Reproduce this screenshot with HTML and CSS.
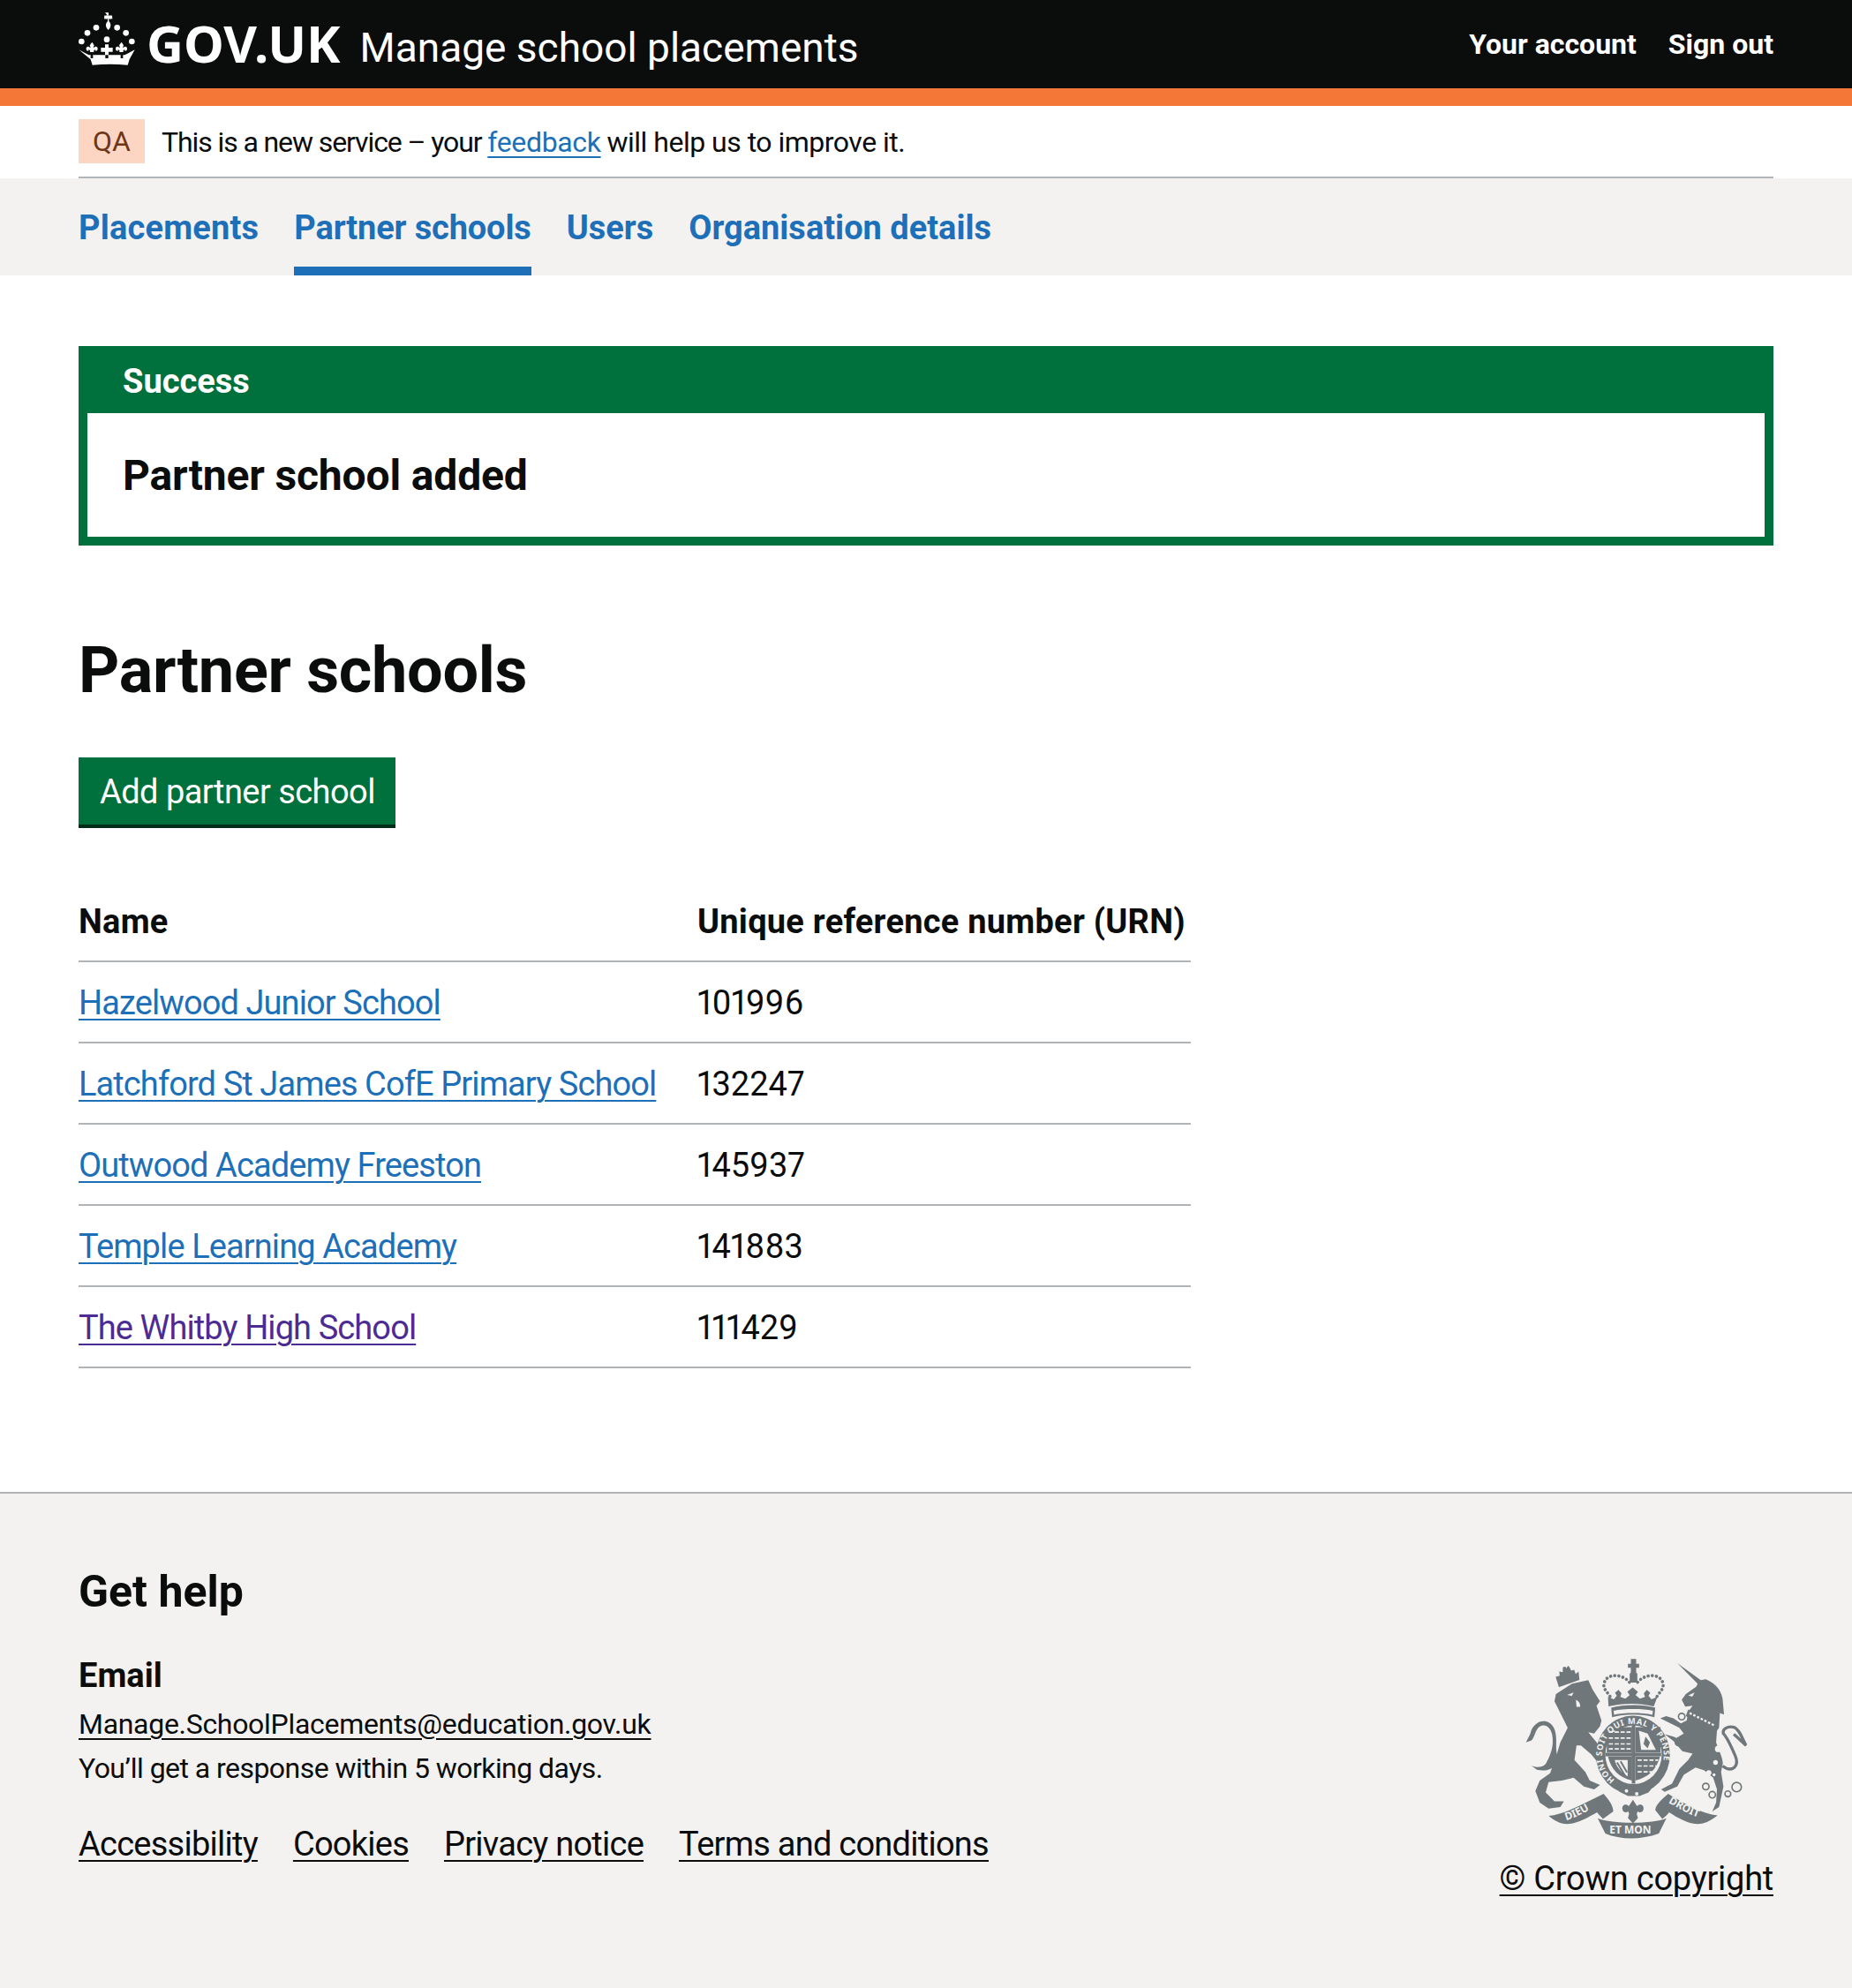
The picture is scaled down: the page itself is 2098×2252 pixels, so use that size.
FILE: index.html
```html
<!DOCTYPE html>
<html lang="en">
<head>
  <meta charset="UTF-8" />
  <title>Partner schools - Manage school placements - GOV.UK</title>
  <link rel="stylesheet" href="styles.css">
</head>
<body>

  <header class="site-header">
    <div class="width-container header-inner">
      <a class="logo" href="#">
        <svg class="crown" viewBox="88 42 190 180" aria-hidden="true">
          <g fill="#fff">
            <!-- cross and pearl on top -->
            <path d="M177 43h12v12l4-3c2 0 6 2 8 0l1 13c-3-2-6 0-9 0l-3-3v10c7 6 8 16 3 24l-5 6-5-6c-5-8-4-18 3-24v-10l-3 3c-3 0-6-2-9 0l1-13c2 2 6 0 8 0l4 3z"/>
            <circle cx="147" cy="94" r="10"/><circle cx="218" cy="94" r="10"/>
            <circle cx="117" cy="112" r="10"/><circle cx="248" cy="112" r="10"/>
            <circle cx="97" cy="141" r="10"/><circle cx="268" cy="141" r="10"/>
            <circle cx="183" cy="134" r="10"/>
            <!-- band -->
            <path d="M88 169l22 12c4 2 8 4 12 6l6 0 0 11h8l0-11 42 0 0 11h10l0-11 42 0 0 11h8l0-11 6 0c4-2 8-4 12-6l22-12-18 33-6 19c-40-4-80-4-120 0l-6-19z"/>
            <!-- fleurs -->
            <path d="M133 143l7 11-3 9 6-4c5-2 10 2 9 8-1 5-5 7-9 5l2-4-6 3 0 6-6 0-1 0-6 0 0-6-6-3 2 4c-4 2-8 0-9-5-1-6 4-10 9-8l6 4-3-9z"/>
            <path d="M233 143l7 11-3 9 6-4c5-2 10 2 9 8-1 5-5 7-9 5l2-4-6 3 0 6-6 0-1 0-6 0 0-6-6-3 2 4c-4 2-8 0-9-5-1-6 4-10 9-8l6 4-3-9z"/>
            <path d="M177 151h12v11h14v14h-14v11h-12v-11h-14v-14h14z"/>
          </g>
        </svg>
        <span class="logo-text">GOV.UK</span>
      </a>
      <a class="service-name" href="#">Manage school placements</a>
      <nav class="account-nav">
        <a href="#">Your account</a>
        <a href="#">Sign out</a>
      </nav>
    </div>
    <div class="header-stripe"></div>
  </header>

  <div class="width-container">
    <div class="phase-banner">
      <strong class="tag">QA</strong>
      <span class="phase-text">This is a new service – your <a href="#">feedback</a> <span class="phase-tail">will help us to improve it.</span></span>
    </div>
  </div>

  <nav class="primary-nav">
    <ul class="width-container primary-list">
      <li><a href="#">Placements</a></li>
      <li class="active"><a href="#">Partner schools</a></li>
      <li><a href="#">Users</a></li>
      <li><a href="#">Organisation details</a></li>
    </ul>
  </nav>

  <main class="width-container main">
    <div class="banner">
      <h2 class="banner-title">Success</h2>
      <div class="banner-body">Partner school added</div>
    </div>

    <h1>Partner schools</h1>

    <a class="button" href="#">Add partner school</a>

    <table class="table">
      <thead>
        <tr><th class="col-name">Name</th><th>Unique reference number (URN)</th></tr>
      </thead>
      <tbody>
        <tr><td><a href="#">Hazelwood Junior School</a></td><td class="urn">101996</td></tr>
        <tr><td><a href="#">Latchford St James CofE Primary School</a></td><td class="urn">132247</td></tr>
        <tr><td><a href="#">Outwood Academy Freeston</a></td><td class="urn">145937</td></tr>
        <tr><td><a href="#">Temple Learning Academy</a></td><td class="urn">141883</td></tr>
        <tr><td><a class="visited" href="#">The Whitby High School</a></td><td class="urn">111429</td></tr>
      </tbody>
    </table>
  </main>

  <footer class="footer">
    <div class="width-container footer-inner">
      <div class="footer-main">
        <h2>Get help</h2>
        <h3>Email</h3>
        <p class="footer-email"><a href="#">Manage.SchoolPlacements@education.gov.uk</a></p>
        <p class="footer-note">You’ll get a response within 5 working days.</p>
        <ul class="footer-links">
          <li><a href="#">Accessibility</a></li>
          <li><a href="#">Cookies</a></li>
          <li><a href="#">Privacy notice</a></li>
          <li><a href="#">Terms and conditions</a></li>
        </ul>
      </div>
      <div class="footer-crest">
        <svg class="crest" viewBox="80 50 760 620" aria-hidden="true">
          <g fill="#6f777b">
            <!-- lion -->
            <path d="M190 175l55-35 55-12 15 32 25 40-12 15 17 50-5 20-20 25-20-5 45 55 12 35-27 10-20-25-35-30-15 0-7 50 37 40 15 30 35 15-20 15-35-10-35-30-40 10-45 5-10 35 30 30 32 0-12 20-40 5-30-20-15-40 15-35 35-25 20-55 15-50 25-50-25-50-20-40z"/>
            <path d="M200 395c-10 35-40 45-75 38l-20-15c10 8 40 8 50-5 15-25 30-60 22-100-5-25-25-40-45-25-12 10-15 35-25 45l-19 7 15-30c5-25 25-45 50-42 30 5 38 35 38 65 0 25-2 45 9 62z"/>
            <!-- lion crown -->
            <path d="M200 152l70-25-3-28-10 8-5-14-10 3-6-12-5-5-5 8-12 2-1 12-12-2 2 14-14 4z"/>
            <circle cx="219" cy="88" r="6"/>
            <path d="M228 178l22-8-6 12zM258 195c10 5 16 12 14 24h-12z" fill="#f3f2f1"/>
            <!-- unicorn -->
            <path d="M603 70L683 128 700 125C725 135 750 155 757 190L762 245 748 240 745 290 738 300 735 340C745 370 755 385 758 410L752 440 760 490 745 560 722 575 735 545 738 500 725 460 695 435 665 425 625 450 603 490 560 508 548 500 585 480 610 430 640 400 655 378 620 370 590 335 560 312 590 320 600 325 625 310 610 290 580 275 545 258 565 250 590 258 615 275 635 265 640 235 655 215 630 218 618 195 632 175 668 150 672 140z"/>
            <path d="M757 420C790 445 815 420 800 385 785 350 770 320 760 310 755 295 775 283 795 288 815 295 825 330 837 350 820 335 805 320 795 312" fill="none" stroke="#6f777b" stroke-width="10"/>
            <path d="M640 228l100 52-8 22-100-52z"/>
            <path d="M645 240l84 42" fill="none" stroke="#f3f2f1" stroke-width="7" stroke-dasharray="8 6"/>
            <path d="M640 180l22-10-8 14z" fill="#f3f2f1"/>
            <g fill="none" stroke="#6f777b" stroke-width="5">
              <circle cx="618" cy="252" r="11"/>
              <circle cx="607" cy="340" r="11"/>
              <circle cx="700" cy="490" r="11"/>
              <circle cx="722" cy="518" r="11"/>
              <circle cx="775" cy="515" r="10"/>
              <circle cx="805" cy="492" r="16"/>
            </g>
            <g fill="#f3f2f1">
              <circle cx="742" cy="362" r="11"/>
              <circle cx="733" cy="408" r="8"/>
              <circle cx="710" cy="443" r="9"/>
              <circle cx="728" cy="450" r="5"/>
            </g>
            <!-- royal crown -->
            <path d="M445 56h18v16h10v14h-10v16l4 4v30h-26v-30l4-4V86h-10V72h10z"/>
            <path d="M440 135c-25-30-75-30-85 0-8 22 10 32 20 50M468 135c25-30 75-30 85 0 8 22-10 32-20 50" fill="none" stroke="#6f777b" stroke-width="11" stroke-linecap="round" stroke-dasharray="0.1 14"/>
            <path d="M367 185l20 8 10-12-6-10 12-10 10 12-4 12 17 6 15-12-8-11 18-15 18 15-8 11 15 12 17-6-4-12 10-12 12 10-6 10 10 12 20-8-12 32c-50-12-102-12-154 0z"/>
            <path d="M378 222c40-12 110-12 150 0l-3 32c-40-12-104-12-144 0z"/>
            <path d="M386 232c35-8 100-8 134 0l-2 14c-35-8-95-8-130 0z" fill="#f3f2f1"/>
            <!-- garter ring -->
            <ellipse cx="452" cy="382" rx="126" ry="133"/>
            <ellipse cx="454" cy="382" rx="96" ry="100" fill="#f3f2f1"/>
            <!-- shield quarters -->
            <path d="M363 288h86v86h-86zM460 288h86v86h-86z"/>
            <path d="M367 388h82v82c-45-10-72-40-82-82zM460 388h84c-10 42-40 72-84 82z"/>
            <g fill="none" stroke="#f3f2f1" stroke-width="5" stroke-dasharray="14 6">
              <path d="M370 305h74M370 325h74M370 345h74M370 362h74"/>
              <path d="M468 400h70M468 420h66M468 440h50"/>
            </g>
            <path d="M472 300l30 10 28 55h-50z" fill="#f3f2f1"/>
            <path d="M495 320l15 20-8 20-14-15z"/>
            <path d="M390 400h44v55c-20-8-38-30-44-55z" fill="#f3f2f1"/>
            <path d="M398 408l30 50M410 404l22 38M394 422l26 32" stroke="#6f777b" stroke-width="6"/>
            <!-- pale and fess -->
            <path d="M448 280h12v200h-12zM358 375h190v12h-190z"/>
            <!-- garter buckle -->
            <path d="M395 490l130-5-20 25-30 12-40 0-30-15z"/>
            <circle cx="430" cy="505" r="6" fill="#f3f2f1"/><circle cx="465" cy="515" r="6" fill="#f3f2f1"/>
            <!-- motto ribbon -->
            <path d="M165 590C220 585 290 545 352 515 370 535 385 555 385 575L350 600C340 590 335 585 330 578 290 600 250 625 210 615 190 610 178 600 165 590z"/>
            <path d="M740 588C690 585 620 545 572 515 555 530 530 550 528 570L552 600C560 595 570 585 575 578 610 600 650 625 690 615 710 610 725 600 740 588z"/>
            <path d="M332 598C380 618 520 618 566 598L540 650C480 672 410 672 358 650z"/>
            <path d="M452 535l14 22c8-10 24-6 22 10-2 10-12 14-20 8l-3 8 4 14-17 18-17-18 4-14-3-8c-8 6-18 2-20-8-2-16 14-20 22-10z"/>
          </g>
          <path id="garter-arc" d="M399.5 473A105 105 0 1 1 504.5 473" fill="none"/>
          <text class="crest-text garter"><textPath href="#garter-arc" startOffset="2%">HONI SOIT QUI MAL Y PENSE</textPath></text>
          <path id="dieu-arc" d="M225 605C260 595 295 575 335 550" fill="none"/>
          <text class="crest-text"><textPath href="#dieu-arc">DIEU</textPath></text>
          <path id="droit-arc" d="M572 545C610 565 650 592 705 602" fill="none"/>
          <text class="crest-text"><textPath href="#droit-arc">DROIT</textPath></text>
          <text class="crest-text" x="372" y="650">ET MON</text>
        </svg>
        <a class="copyright" href="#">© Crown copyright</a>
      </div>
    </div>
  </footer>

</body>
</html>
```

FILE: styles.css
```css
* { box-sizing: border-box; }

body {
  font-family: 'Roboto', sans-serif;
  margin: 0;
  padding: 0;
  color: #0b0c0c;
  background: #ffffff;
  font-size: 32px;
}

a { color: #1d70b8; text-underline-offset: 5px; text-decoration-thickness: 2px; }

.width-container {
  width: 1920px;
  margin: 0 89px;
}

.site-header {
  background: #0b0c0c;
}

.header-inner {
  height: 100px;
  display: flex;
  align-items: center;
}

.logo {
  display: flex;
  align-items: center;
  color: #fff;
  text-decoration: none;
}

.crown {
  width: 64px;
  height: 60px;
  margin-top: -12px;
}

.logo-text {
  font-family: 'Noto Sans', sans-serif;
  font-weight: 700;
  font-size: 58px;
  margin-left: 13px;
  margin-top: -4px;
}

.service-name {
  color: #fff;
  text-decoration: none;
  font-size: 46px;
  margin-left: 22px;
  margin-top: 7px;
}

.account-nav {
  margin-left: auto;
  display: flex;
  gap: 36px;
  margin-top: 0;
}

.account-nav a {
  color: #fff;
  text-decoration: none;
  font-weight: 700;
  font-size: 32px;
}

.header-stripe {
  height: 20px;
  background: #f47738;
}

.phase-banner {
  height: 82px;
  display: flex;
  align-items: center;
  border-bottom: 2px solid #b1b4b6;
  gap: 19px;
  font-size: 32px;
}

.phase-text {
  letter-spacing: -1.1px;
  margin-top: 1px;
}

.phase-text a { letter-spacing: -0.35px; }

.phase-tail { letter-spacing: -0.5px; }

.tag {
  background: #fcd6c3;
  color: #6e3619;
  font-weight: 400;
  width: 75px;
  height: 50px;
  line-height: 50px;
  text-align: center;
}

.primary-nav {
  background: #f3f2f1;
  height: 110px;
}

.primary-list {
  list-style: none;
  padding: 0;
  display: flex;
  gap: 40px;
  height: 110px;
}

.primary-list li {
  padding-top: 31px;
  line-height: 50px;
}

.primary-list li:first-child { letter-spacing: 0.2px; }

.primary-list .active { letter-spacing: -0.15px; }

.primary-list a {
  font-weight: 700;
  font-size: 38px;
  text-decoration: none;
}

.primary-list .active {
  border-bottom: 10px solid #1d70b8;
}

.main {
  padding-top: 80px;
  padding-bottom: 140px;
}

.banner {
  border: 10px solid #00703c;
  background: #00703c;
}

.banner-title {
  color: #fff;
  font-size: 38px;
  line-height: 50px;
  font-weight: 700;
  margin: 0;
  padding: 5px 40px 0;
  height: 66px;
}

.banner-body {
  background: #fff;
  font-size: 48px;
  line-height: 60px;
  font-weight: 700;
  padding: 41px 40px 0;
  height: 140px;
  letter-spacing: -0.15px;
}

h1 {
  font-size: 72px;
  line-height: 80px;
  font-weight: 700;
  margin: 102px 0 58px;
  letter-spacing: -0.3px;
}

.button {
  display: block;
  width: 359px;
  height: 80px;
  background: #00703c;
  color: #fff;
  text-decoration: none;
  font-size: 38px;
  line-height: 79px;
  padding: 0 24px;
  border-bottom: 4px solid #002d18;
  white-space: nowrap;
  letter-spacing: -0.55px;
}

.table {
  width: 1260px;
  margin-top: 59px;
  border-collapse: collapse;
  font-size: 38px;
  table-layout: fixed;
}

.table th {
  text-align: left;
  font-weight: 700;
  letter-spacing: 0.25px;
}

.col-name { width: 701px; }

.table th,
.table td {
  height: 92px;
  border-bottom: 2px solid #b1b4b6;
  padding: 2px 0 0;
  white-space: nowrap;
}

.table td {
  letter-spacing: -0.9px;
  font-variant-numeric: proportional-nums;
}

.table td.urn { letter-spacing: 0; }

.visited { color: #4c2c92; }

.footer {
  background: #f3f2f1;
  border-top: 2px solid #b1b4b6;
  height: 563px;
}

.footer-inner {
  display: flex;
  justify-content: space-between;
  padding-top: 81px;
}

.footer a { color: #0b0c0c; }

.footer h2 {
  font-size: 50px;
  line-height: 60px;
  margin: 0 0 43px;
}

.footer h3 {
  font-size: 38px;
  line-height: 44px;
  margin: 0 0 11px;
}

.footer-email {
  font-size: 32px;
  line-height: 44px;
  margin: 0 0 8px;
  letter-spacing: -0.3px;
}

.footer-note {
  font-size: 32px;
  line-height: 40px;
  margin: 0 0 41px;
  letter-spacing: -0.55px;
}

.footer-links {
  list-style: none;
  padding: 0;
  margin: 0;
  display: flex;
  gap: 40px;
  font-size: 38px;
  line-height: 50px;
  letter-spacing: -0.75px;
}

.footer-crest {
  display: flex;
  flex-direction: column;
  align-items: flex-end;
}

.crest {
  width: 253px;
  height: 207px;
  margin: 104px 30px 19px 0;
}

.copyright {
  font-size: 38px;
  line-height: 50px;
  letter-spacing: -0.25px;
}

.crest-text {
  fill: #f3f2f1;
  font-family: 'Noto Sans', sans-serif;
  font-weight: 700;
  font-size: 36px;
}

.crest-text.garter { font-size: 28px; letter-spacing: 2px; }
```
